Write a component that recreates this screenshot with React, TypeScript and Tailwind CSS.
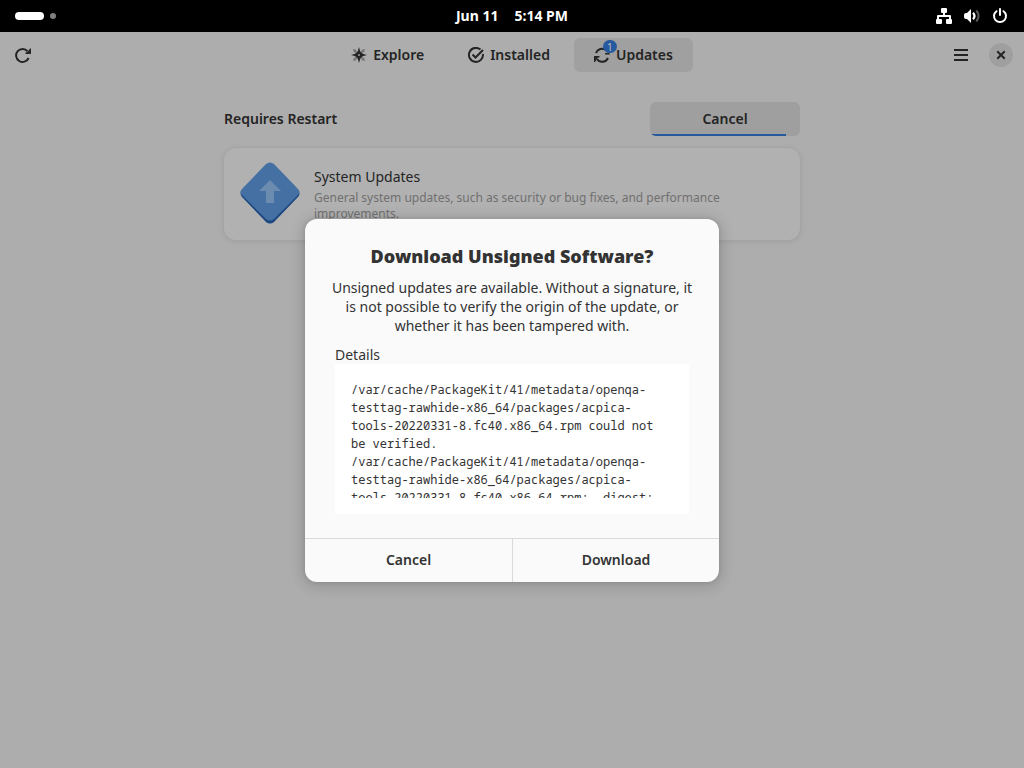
import type { ReactNode } from "react";

type IconProps = { children: ReactNode };

function Icon({ children }: IconProps) {
  return (
    <svg viewBox="0 0 16 16" className="size-4 shrink-0" fill="currentColor" aria-hidden="true">
      {children}
    </svg>
  );
}

function TopBar() {
  return (
    <div className="grid h-8 grid-cols-3 items-center bg-black text-white">
      <div className="flex items-center gap-1.5 px-[15px]">
        <span className="h-2 w-[29px] rounded-full bg-white" />
        <span className="size-1.5 rounded-full bg-[#808080]" />
      </div>
      <div className="flex justify-center gap-4 text-sm font-bold">
        <span>Jun 11</span>
        <span>5:14 PM</span>
      </div>
      <div className="flex items-center justify-end gap-3 pr-4">
        <Icon>
          <path d="M5 1q0-1 1-1h4q1 0 1 1v3q0 1-1 1H9v2h5q1 0 1 1v3q1 0 1 1v3q0 1-1 1h-4q-1 0-1-1v-3q0-1 1-1h2V9H3v2h2q1 0 1 1v3q0 1-1 1H1q-1 0-1-1v-3q0-1 1-1V8q0-1 1-1h5V5H6Q5 5 5 4Z" />
        </Icon>
        <Icon>
          <path d="M7 1v14L3 11H2q-2 0-2-2V7q0-2 2-2h1Z" />
          <path d="M9 4.700q3 3.300 0 6.600" fill="none" stroke="currentColor" strokeWidth="2.200" />
          <path d="M12.300 2.500q4.500 5.500 0 11" fill="none" stroke="currentColor" strokeOpacity=".35" strokeWidth="2" />
        </Icon>
        <Icon>
          <path d="M4.500 3.200a6 6 0 1 0 7 0M8 1v6" fill="none" stroke="currentColor" strokeWidth="2" strokeLinecap="round" />
        </Icon>
      </div>
    </div>
  );
}

function HeaderBar() {
  return (
    <header className="grid h-[46px] grid-cols-[1fr_auto_1fr] items-center">
      <button type="button" aria-label="Refresh" className="ml-1.5 flex size-[34px] items-center justify-center">
        <Icon>
          <path d="M13.600 11A6.500 6.500 0 1 1 12.600 4.300" fill="none" stroke="currentColor" strokeWidth="2" />
          <path d="M16 1.500V7h-5.500V5.500l2-.5L15 1.500Z" />
        </Icon>
      </button>
      <nav className="flex gap-1">
        <button type="button" className="flex h-[34px] items-center gap-1.5 px-5 font-semibold">
          <Icon>
            <path d="m2 2 3 .8L6.500 6 8 8 6 6.500 2.800 5ZM14 2l-3 .8L9.500 6 8 8l2-1.500L13.200 5ZM2 14l3-.8L6.500 10 8 8 6 9.500 2.800 11ZM14 14l-3-.8L9.500 10 8 8l2 1.500 3.200 1.500Z" fillOpacity=".4" />
            <path fillRule="evenodd" d="M8 0q.8 4.500 2.300 5.700Q11.500 7.200 16 8q-4.500.8-5.700 2.300Q8.800 11.500 8 16q-.8-4.500-2.300-5.700Q4.500 8.800 0 8q4.500-.8 5.700-2.300Q7.200 4.500 8 0Zm0 7a1 1 0 1 0 0 2 1 1 0 0 0 0-2Z" />
          </Icon>
          Explore
        </button>
        <button type="button" className="flex h-[34px] items-center gap-1.5 px-5 font-semibold">
          <Icon>
            <path d="M12.500 2.600A7 7 0 1 0 14.900 7" fill="none" stroke="currentColor" strokeWidth="2" />
            <path d="m4.500 7.500 3 3L15 3" fill="none" stroke="currentColor" strokeWidth="2" />
          </Icon>
          Installed
        </button>
        <button type="button" aria-pressed="true" className="relative flex h-[34px] items-center gap-1.5 rounded-md bg-[#a0a0a0] px-5 font-semibold">
          <Icon>
            <path d="M2 6a6.500 6.500 0 0 1 10-3M14 11a6.300 6.300 0 0 1-11 1" fill="none" stroke="currentColor" strokeWidth="2" />
            <path d="M0 9h5.500v1.200l-2 .8L1 15H0ZM16 7.500h-5V6.300l4-.8Z" />
          </Icon>
          Updates
          <span className="absolute top-0.5 left-[29px] flex h-[13px] w-3.5 items-center justify-center rounded-full bg-[#255a9f] text-[10px] leading-3 font-normal text-[#c0c0c0]">
            1
          </span>
        </button>
      </nav>
      <div className="flex items-center justify-end gap-[11px] pr-[11px]">
        <button type="button" aria-label="Main menu" className="flex size-[34px] items-center justify-center">
          <Icon>
            <path d="M1 2h14v2H1ZM1 7h14v2H1ZM1 12h14v2H1Z" />
          </Icon>
        </button>
        <button type="button" aria-label="Close" className="flex size-6 items-center justify-center rounded-full bg-[#9f9f9f]">
          <Icon>
            <path d="m5 5 6 6M11 5l-6 6" stroke="currentColor" strokeWidth="2" strokeLinecap="square" />
          </Icon>
        </button>
      </div>
    </header>
  );
}

function UpdatesPage() {
  return (
    <main className="mx-auto w-full max-w-[576px] pt-6">
      <div className="flex items-center justify-between">
        <h2 className="font-semibold">Requires Restart</h2>
        <button type="button" className="relative h-[34px] w-[150px] overflow-hidden rounded-md bg-[#9f9f9f] font-semibold">
          Cancel
          <span className="absolute bottom-0 left-0 h-0.5 w-[136px] bg-[#255a9f]" />
        </button>
      </div>
      <a href="#system-updates" className="mt-3 flex h-[92px] items-start gap-3 rounded-xl bg-[#b1b1b1] px-3.5 shadow-[0_0_0_1px_#a5a5a5,0_1px_4px_1px_#9f9f9f]">
        <svg viewBox="0 0 64 64" className="mt-3.5 size-16 shrink-0" aria-hidden="true">
          <path d="M28 3q4-3 8 0l24 25q3 4 0 7L36 60q-4 3-8 0L4 35q-3-4 0-7Z" fill="#1c4780" />
          <path d="M28 2q4-3 8 0l24 25q3 3 0 6L36 57q-4 3-8 0L4 33q-3-3 0-6Z" fill="#4570a3" />
          <path d="m32 18 11 11h-7v12h-8V29h-7Z" fill="#6b8baf" />
        </svg>
        <div className="pt-[19px]">
          <h3 className="leading-5">System Updates</h3>
          <p className="mt-[3px] max-w-[430px] text-xs leading-4 text-[#707070]">
            General system updates, such as security or bug fixes, and performance improvements.
          </p>
        </div>
      </a>
    </main>
  );
}

const details = [
  "/var/cache/PackageKit/41/metadata/openqa-testtag-rawhide-x86_64/packages/acpica-tools-20220331-8.fc40.x86_64.rpm could not be verified.",
  "/var/cache/PackageKit/41/metadata/openqa-testtag-rawhide-x86_64/packages/acpica-tools-20220331-8.fc40.x86_64.rpm:  digest:",
];

function UnsignedDialog() {
  return (
    <div className="absolute inset-0 flex items-center justify-center">
      <section
        role="dialog"
        aria-labelledby="dialog-title"
        className="w-full max-w-[414px] overflow-hidden rounded-xl bg-[#fafafa] text-[#333333] shadow-[0_2px_14px_3px_rgba(0,0,0,0.14),0_0_4px_rgba(0,0,0,0.12)]"
      >
        <div className="px-[30px] pt-6 pb-6">
          <h1 id="dialog-title" className="text-center text-lg leading-[26px] font-black">
            Download Unsigned Software?
          </h1>
          <p className="-mx-2 mt-[9px] text-center leading-[19px]">
            Unsigned updates are available. Without a signature, it is not possible to verify the origin of the update, or whether it has been tampered with.
          </p>
          <h2 id="details" className="mt-2.5 leading-[19px]">Details</h2>
          <div aria-labelledby="details" role="region" className="bg-white px-4 pt-[17px] pb-4">
            <div className="h-[117px] overflow-hidden font-['Noto_Sans_Mono','DejaVu_Sans_Mono',monospace] text-xs leading-[18px] whitespace-pre-wrap">
              {details.map((line) => (
                <p key={line}>{line}</p>
              ))}
            </div>
          </div>
        </div>
        <div className="grid grid-cols-2 border-t border-[#dadada]">
          <button type="button" className="h-[43px] font-semibold">Cancel</button>
          <button type="button" className="h-[43px] border-l border-[#dadada] font-semibold">Download</button>
        </div>
      </section>
    </div>
  );
}

export default function App() {
  return (
    <div className="flex min-h-screen flex-col bg-[#adadad] font-['Noto_Sans',sans-serif] text-sm text-[#242424]">
      <TopBar />
      <div className="relative grow">
        <HeaderBar />
        <UpdatesPage />
        <UnsignedDialog />
      </div>
    </div>
  );
}
